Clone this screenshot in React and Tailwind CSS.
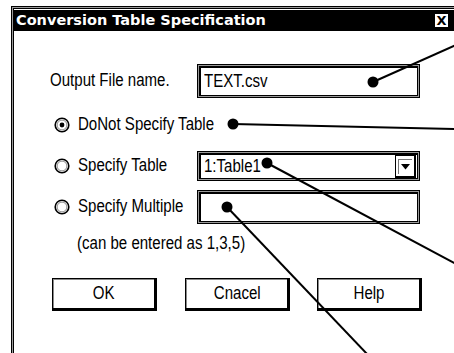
import React from "react";

const body = { fontFamily: '"Liberation Sans", Arial, sans-serif' };

// narrow face: Arial Narrow isn't installed, so squeeze Liberation Sans
function T({ children, center = false }) {
  return (
    <span
      className={
        "inline-block whitespace-nowrap text-[17.5px] leading-none scale-x-[0.86] " +
        (center ? "origin-center" : "origin-left")
      }
    >
      {children}
    </span>
  );
}

function Radio({ checked }) {
  return (
    <svg width="16" height="16" viewBox="0 0 16 16" className="shrink-0">
      <circle cx="8" cy="8" r="6.8" fill="white" stroke="black" strokeWidth="1.6" />
      <circle cx="8" cy="8" r="4.9" fill="none" stroke="#8a8a8a" strokeWidth="1" />
      {checked && <circle cx="8" cy="8" r="2.4" fill="black" />}
    </svg>
  );
}

function Field({ children, className = "" }) {
  // sunken edit box
  return (
    <div className={"border border-black bg-[#9a9a9a] p-px " + className}>
      <div className="h-full border-t-2 border-l-2 border-black border-r border-b bg-white flex items-center pl-[3px]">
        {children}
      </div>
    </div>
  );
}

function Button({ label }) {
  return (
    <div className="w-[105px] h-[33px] border border-black border-r-[3px] border-b-[3px] bg-white">
      <div className="h-full border-t border-l border-[#8a8a8a] flex items-center justify-center">
        <T center>{label}</T>
      </div>
    </div>
  );
}

export default function App() {
  return (
    <div className="relative w-[454px] h-[353px] bg-white overflow-hidden text-black" style={body}>
      <div className="ml-[11px] mt-[6px] h-[400px] border-l border-t border-black bg-[#9a9a9a] pl-px pt-px">
        <div className="h-full border-l border-t border-black bg-white pt-px">
          {/* title bar */}
          <div className="h-[21px] bg-black flex items-center justify-between pl-[2px]">
            <span className="text-white font-bold text-[14.5px] leading-none" style={{ fontFamily: '"DejaVu Sans", Verdana, sans-serif' }}>
              Conversion Table Specification
            </span>
            <div className="flex items-center h-full">
              <div className="w-[16px] h-[16px] bg-white border border-black border-r-2 border-b-2 flex items-center justify-center text-[13px] font-bold leading-none" style={{ fontFamily: '"DejaVu Sans", sans-serif' }}>
                X
              </div>
              <div className="w-[4px]" />
            </div>
          </div>

          {/* output file name */}
          <div className="mt-[33px] flex items-center h-[34px]">
            <div className="ml-[36px] w-[147px]">
              <T>Output File name.</T>
            </div>
            <Field className="w-[223px] h-[34px]">
              <T>TEXT.csv</T>
            </Field>
          </div>

          {/* do not specify */}
          <div className="mt-[17px] flex items-center h-[20px] ml-[40px] gap-[8px]">
            <Radio checked />
            <T>DoNot Specify Table</T>
          </div>

          {/* specify table */}
          <div className="mt-[16px] flex items-center h-[30px]">
            <div className="ml-[40px] w-[143px] flex items-center gap-[8px]">
              <Radio />
              <T>Specify Table</T>
            </div>
            <div className="w-[223px] h-[30px] border border-black bg-[#9a9a9a] p-px">
              <div className="h-full border-t-2 border-l-2 border-black border-r border-b bg-white flex items-center justify-between pl-[3px] pr-px">
                <T>1:Table1</T>
                <div className="w-[21px] h-[23px] border border-black border-r-2 border-b-2 bg-white flex items-center justify-center">
                  <div className="w-[14px] h-[15px] border-t border-l border-[#777] flex items-center justify-center">
                    <svg width="9" height="6" viewBox="0 0 9 6">
                      <path d="M0 0 H9 L4.5 5.5 Z" fill="black" />
                    </svg>
                  </div>
                </div>
              </div>
            </div>
          </div>

          {/* specify multiple */}
          <div className="mt-[9px] flex items-center h-[34px]">
            <div className="ml-[40px] w-[143px] flex items-center gap-[8px]">
              <Radio />
              <T>Specify Multiple</T>
            </div>
            <Field className="w-[223px] h-[34px]" />
          </div>

          <div className="mt-[10px] ml-[63px] h-[20px] flex items-center">
            <T>(can be entered as 1,3,5)</T>
          </div>

          {/* buttons */}
          <div className="mt-[24px] ml-[38px] flex gap-[28px]">
            <Button label="OK" />
            <Button label="Cnacel" />
            <div className="-ml-px">
              <Button label="Help" />
            </div>
          </div>
        </div>
      </div>

      {/* callout lines */}
      <svg className="absolute inset-0 pointer-events-none" width="454" height="353" viewBox="0 0 454 353">
        <g stroke="black" strokeWidth="2">
          <line x1="373" y1="82" x2="456" y2="45" />
          <line x1="233" y1="124" x2="456" y2="129" />
          <line x1="267" y1="163" x2="456" y2="264" />
          <line x1="227" y1="207" x2="368" y2="355" />
        </g>
        <g fill="black">
          <circle cx="373" cy="82" r="5.5" />
          <circle cx="233" cy="124" r="5.5" />
          <circle cx="267" cy="163" r="5.5" />
          <circle cx="227" cy="207" r="5.5" />
        </g>
      </svg>
    </div>
  );
}
